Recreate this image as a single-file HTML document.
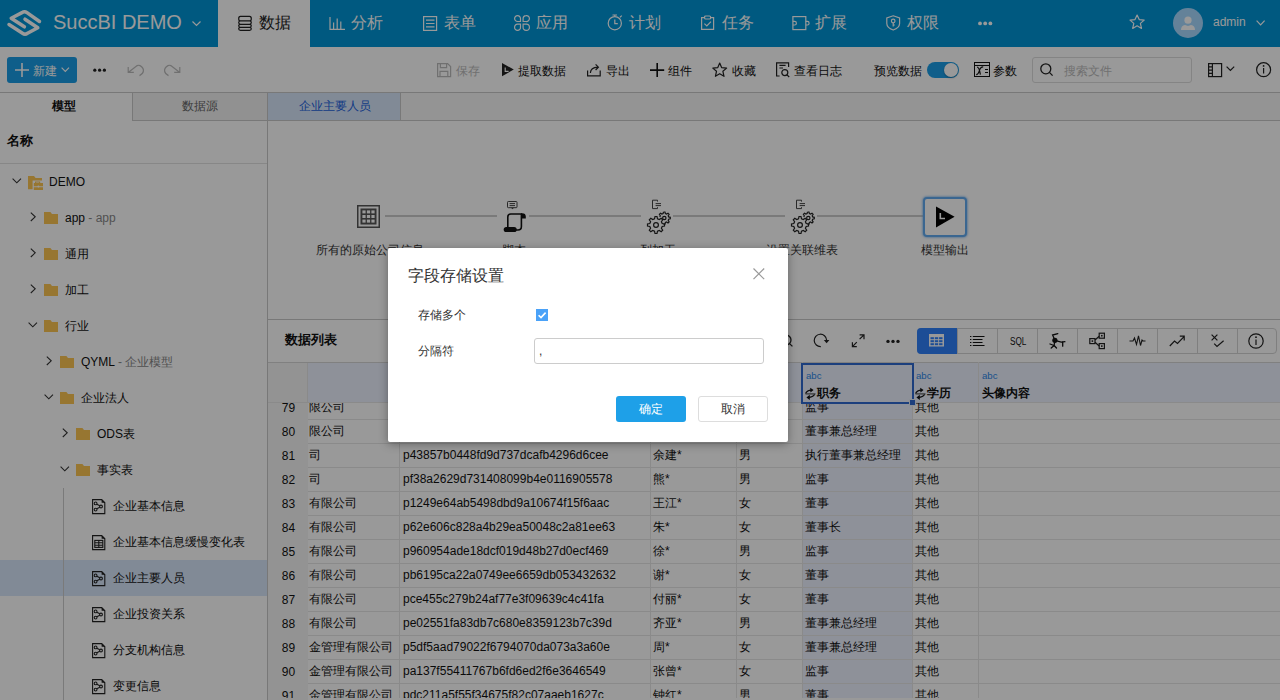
<!DOCTYPE html>
<html><head><meta charset="utf-8">
<style>
*{box-sizing:border-box;margin:0;padding:0}
html,body{width:1280px;height:700px;overflow:hidden;background:#fff}
body{font-family:"Liberation Sans",sans-serif;font-size:12px;color:#333;position:relative}
.a{position:absolute;white-space:nowrap}
svg{position:absolute;overflow:visible}
#hdr{left:0;top:0;width:1280px;height:47px;background:#0095d6}
.nav{color:#fff;font-size:16px;top:13px;line-height:20px}
#tb{left:0;top:47px;width:1280px;height:46px;background:#fff;border-bottom:1px solid #c8c8c8}
.tbt{top:64px;line-height:14px;color:#111}
#ov{left:0;top:0;width:1280px;height:700px;background:rgba(0,0,0,.4)}
#dlg{left:388px;top:248px;width:400px;height:194px;background:#fff;border-radius:2px;box-shadow:0 2px 10px rgba(0,0,0,.35)}
</style></head><body>
<!-- HEADER -->
<div id="hdr" class="a"></div>
<div class="a" style="left:218px;top:0;width:92px;height:47px;background:#fff"></div>
<svg style="left:0;top:0" width="60" height="47"><g fill="none" stroke="#fff" stroke-width="3.5" stroke-linecap="round" stroke-linejoin="round">
<path d="M39.5 21.5 L27 12.6 Q24.5 10.9 22 12.6 L11.2 18.2 L24.4 26.8"/>
<path d="M9 24.5 L22.5 33.3 Q25 35 27.5 33.3 L37.8 27.8 L25 19.2"/>
</g></svg>
<div class="a" style="left:53px;top:10px;font-size:20px;line-height:24px;color:#fff">SuccBI DEMO</div>
<svg style="left:192px;top:21px" width="9" height="5"><path d="M0.5 0.5 L4.5 4.5 L8.5 0.5" fill="none" stroke="#fff" stroke-width="1.2"/></svg>
<!-- nav icons -->
<svg style="left:238px;top:15px" width="15" height="17"><path d="M2.4 1.4 H11.6 M2.4 5.9 H11.6 M2.4 9.3 H11.6 M2.4 12.3 H11.6 M2.4 15.3 H11.6 M2.4 1.4 Q0.7 1.4 0.7 3.6500000000000004 Q0.7 5.9 2.4 5.9 M11.6 1.4 Q13.3 1.4 13.3 3.6500000000000004 Q13.3 5.9 11.6 5.9 M2.4 5.9 Q0.7 5.9 0.7 7.6000000000000005 Q0.7 9.3 2.4 9.3 M11.6 5.9 Q13.3 5.9 13.3 7.6000000000000005 Q13.3 9.3 11.6 9.3 M2.4 9.3 Q0.7 9.3 0.7 10.8 Q0.7 12.3 2.4 12.3 M11.6 9.3 Q13.3 9.3 13.3 10.8 Q13.3 12.3 11.6 12.3 M2.4 12.3 Q0.7 12.3 0.7 13.8 Q0.7 15.3 2.4 15.3 M11.6 12.3 Q13.3 12.3 13.3 13.8 Q13.3 15.3 11.6 15.3" fill="none" stroke="#222" stroke-width="1.2"/></svg>
<svg style="left:329px;top:17px" width="17" height="14"><g fill="none" stroke="#fff" stroke-width="1.2"><path d="M1 0 V12.4 H16"/><path d="M4.6 5.5 V12 M8.2 1.5 V12 M11.8 4.5 V12"/></g></svg>
<svg style="left:423px;top:16px" width="15" height="15"><g fill="none" stroke="#fff" stroke-width="1.2"><rect x="0.6" y="0.6" width="13" height="13.8"/><path d="M3 4.2 H11.5 M3 7.5 H11.5 M3 10.8 H11.5"/></g></svg>
<svg style="left:514px;top:15px" width="17" height="16"><g fill="none" stroke="#fff" stroke-width="1.2"><path d="M6.5 6.5 H3.5500000000000003 A2.95 2.95 0 0 1 0.6 3.5500000000000003 A2.95 2.95 0 0 1 3.5500000000000003 0.6 A2.95 2.95 0 0 1 6.5 3.5500000000000003 Z"/><path d="M9.1 6.5 V3.5500000000000003 A2.95 2.95 0 0 1 12.05 0.6 A2.95 2.95 0 0 1 15.4 3.5500000000000003 A2.95 2.95 0 0 1 12.05 6.5 Z"/><path d="M6.5 9.1 V12.05 A2.95 2.95 0 0 1 3.5500000000000003 15.4 A2.95 2.95 0 0 1 0.6 12.05 A2.95 2.95 0 0 1 3.5500000000000003 9.1 Z"/><path d="M9.1 9.1 H12.05 A2.95 2.95 0 0 1 15.4 12.05 A2.95 2.95 0 0 1 12.05 15.4 A2.95 2.95 0 0 1 9.1 12.05 Z"/></g></svg>
<svg style="left:607px;top:14px" width="17" height="17"><g fill="none" stroke="#fff" stroke-width="1.2"><circle cx="7.8" cy="9.2" r="6.6"/><path d="M5.5 1 H10 M7.8 1 V2.6 M13 3.2 L14.8 1.6 M7.8 5.6 V9.6 H10.8"/></g></svg>
<svg style="left:701px;top:15px" width="15" height="16"><g fill="none" stroke="#fff" stroke-width="1.2"><path d="M3.6 2.6 H0.6 V14.4 H12.6 V2.6 H9.6"/><rect x="3.6" y="1" width="6" height="3" rx="1"/><path d="M3.4 8.6 L5.8 11 L10 6.6"/></g></svg>
<svg style="left:792px;top:16px" width="18" height="15"><g fill="none" stroke="#fff" stroke-width="1.2"><rect x="0.9" y="0.6" width="12.9" height="13"/><path d="M0.9 5.4 H2.6 A1.8 1.8 0 0 1 2.6 9 H0.9 M13.8 5.4 H15.3 A1.8 1.8 0 0 1 15.3 9 H13.8"/></g></svg>
<svg style="left:886px;top:15px" width="15" height="16"><g fill="none" stroke="#fff" stroke-width="1.2"><path d="M7.2 0.8 L13.6 3 V8.4 Q13.6 12.6 7.2 15 Q0.8 12.6 0.8 8.4 V3 Z"/><circle cx="7.2" cy="6" r="1.8"/><path d="M7.2 7.8 V11.6 M7.2 10 H8.8"/></g></svg>
<svg style="left:978px;top:21px" width="15" height="5"><g fill="#fff"><circle cx="2" cy="2.4" r="1.9"/><circle cx="7.2" cy="2.4" r="1.9"/><circle cx="12.4" cy="2.4" r="1.9"/></g></svg>
<div class="a nav" style="left:259px;color:#222">数据</div>
<div class="a nav" style="left:351px">分析</div>
<div class="a nav" style="left:444px">表单</div>
<div class="a nav" style="left:536px">应用</div>
<div class="a nav" style="left:629px">计划</div>
<div class="a nav" style="left:722px">任务</div>
<div class="a nav" style="left:815px">扩展</div>
<div class="a nav" style="left:907px">权限</div>
<svg style="left:1129px;top:14px" width="17" height="17"><path d="M8.1 1 L10.2 5.6 L15.2 6.1 L11.4 9.4 L12.5 14.4 L8.1 11.8 L3.7 14.4 L4.8 9.4 L1 6.1 L6 5.6 Z" fill="none" stroke="#fff" stroke-width="1.2" stroke-linejoin="round"/></svg>
<div class="a" style="left:1173px;top:8px;width:30px;height:30px;border-radius:50%;background:#a7d9ff"></div>
<svg style="left:1180px;top:16px" width="16" height="15"><g fill="#fff"><circle cx="8" cy="4.2" r="3.6"/><path d="M1 14 Q1 9.6 5 9 L8 10 L11 9 Q15 9.6 15 14 Z"/></g></svg>
<div class="a" style="left:1213px;top:15px;font-size:12px;line-height:14px;color:#fff">admin</div>
<svg style="left:1256px;top:20px" width="10" height="7"><path d="M0.6 0.6 L4.6 4.8 L8.6 0.6" fill="none" stroke="#fff" stroke-width="1.2"/></svg>

<!-- TOOLBAR -->
<div id="tb" class="a"></div>
<div class="a" style="left:7px;top:57px;width:70px;height:26px;background:#1a9de6;border-radius:3px"></div>
<svg style="left:15px;top:63px" width="15" height="15"><path d="M7 0 V14 M0 7 H14" stroke="#fff" stroke-width="1.6"/></svg>
<div class="a tbt" style="left:33px;color:#fff">新建</div>
<svg style="left:61px;top:67px" width="10" height="6"><path d="M0.6 0.6 L4.3 4.3 L8 0.6" fill="none" stroke="#fff" stroke-width="1.2"/></svg>
<svg style="left:93px;top:68px" width="14" height="5"><g fill="#222"><circle cx="1.8" cy="2.2" r="1.6"/><circle cx="6.6" cy="2.2" r="1.6"/><circle cx="11.4" cy="2.2" r="1.6"/></g></svg>
<svg style="left:124px;top:60px" width="60" height="20"><g fill="none" stroke="#bbb" stroke-width="1.2"><path d="M4.2 7 V12.4 H9.8 M4.2 12.4 L13.2 5.6 Q14.5 4.9 16 5.6 Q19.8 7.6 19.4 11.2 Q19 13.8 15.5 15.6"/><path d="M55.8 7 V12.4 H50.2 M55.8 12.4 L46.8 5.6 Q45.5 4.9 44 5.6 Q40.2 7.6 40.6 11.2 Q41 13.8 44.5 15.6"/></g></svg>
<!-- right tools -->
<svg style="left:437px;top:63px" width="15" height="15"><g fill="none" stroke="#bbb" stroke-width="1.2"><path d="M0.6 0.6 H10.6 L13.6 3.6 V13.6 H0.6 Z"/><path d="M3.4 0.6 V4.6 H9.6 V0.6 M3 13.6 V8.4 H10.8 V13.6"/></g></svg>
<div class="a tbt" style="left:456px;color:#bbb">保存</div>
<svg style="left:501px;top:62px" width="14" height="16"><path d="M1 1 L12.8 7.6 L1 14.2 Z" fill="#222"/><path d="M4.2 5.6 V9.4 H7.6" fill="none" stroke="#fff" stroke-width="1.1"/></svg>
<div class="a tbt" style="left:518px">提取数据</div>
<svg style="left:587px;top:63px" width="15" height="14"><g fill="none" stroke="#222" stroke-width="1.2"><path d="M0.6 7.4 V12.8 H13.2 V7.4"/><path d="M3.4 10 Q3.6 4.6 10.8 4.2 M8.6 1.4 L11.4 4.2 L8.6 7"/></g></svg>
<div class="a tbt" style="left:606px">导出</div>
<svg style="left:650px;top:63px" width="15" height="15"><path d="M7.2 0 V14 M0 7.1 H14.2" stroke="#111" stroke-width="1.6"/></svg>
<div class="a tbt" style="left:668px">组件</div>
<svg style="left:712px;top:62px" width="17" height="16"><path d="M7.7 1 L9.6 5.6 L14.6 6.1 L10.9 9.3 L12 14.3 L7.7 11.7 L3.4 14.3 L4.5 9.3 L0.8 6.1 L5.8 5.6 Z" fill="none" stroke="#222" stroke-width="1.2" stroke-linejoin="round"/></svg>
<div class="a tbt" style="left:732px">收藏</div>
<svg style="left:776px;top:62px" width="16" height="17"><g fill="none" stroke="#222" stroke-width="1.2"><path d="M3.6 14 H0.6 V0.8 H12.6 V5"/><path d="M3.4 3.4 H9.6 M3.4 6 H7"/><circle cx="8.8" cy="10.6" r="3"/><path d="M11 12.8 L13.2 15"/></g></svg>
<div class="a tbt" style="left:794px">查看日志</div>
<div class="a tbt" style="left:874px">预览数据</div>
<div class="a" style="left:927px;top:62px;width:32px;height:16px;border-radius:8px;background:#1a9de6"></div>
<div class="a" style="left:944px;top:63px;width:14px;height:14px;border-radius:50%;background:#fff;box-shadow:0 1px 2px rgba(0,0,0,.3)"></div>
<svg style="left:974px;top:62px" width="17" height="16"><g fill="none" stroke="#111" stroke-width="1"><rect x="0.5" y="0.5" width="15" height="14"/><path d="M0.5 3.5 H15.5"/><path d="M2.2 12.6 Q4.2 12.6 5.4 8.6 Q6.6 4.8 9.2 4.9 M3 5 Q5.2 5 6.4 12.6" stroke-width="1.2"/><path d="M11 7.5 H14 M11 10.5 H14"/></g></svg>
<div class="a tbt" style="left:993px">参数</div>
<div class="a" style="left:1032px;top:57px;width:160px;height:26px;border:1px solid #ddd;border-radius:3px"></div>
<svg style="left:1040px;top:63px" width="14" height="14"><g fill="none" stroke="#222" stroke-width="1.3"><circle cx="5.8" cy="5.8" r="5"/><path d="M9.4 9.4 L12.6 12.6"/></g></svg>
<div class="a tbt" style="left:1064px;color:#bbb">搜索文件</div>
<svg style="left:1208px;top:63px" width="15" height="15"><g fill="none" stroke="#222" stroke-width="1.2"><rect x="0.6" y="0.6" width="13" height="13"/><path d="M4.4 0.6 V13.6 M0.6 3.8 H4.4 M0.6 7.1 H4.4 M0.6 10.4 H4.4"/></g></svg>
<svg style="left:1226px;top:66px" width="10" height="6"><path d="M0.6 0.6 L4.4 4.4 L8.2 0.6" fill="none" stroke="#222" stroke-width="1.2"/></svg>
<svg style="left:1256px;top:62px" width="16" height="16"><g fill="none" stroke="#222" stroke-width="1.2"><circle cx="7.6" cy="7.7" r="7"/><path d="M7.6 6 V11.4"/></g><circle cx="7.6" cy="3.9" r="0.9" fill="#222"/></svg>

<!-- LEFT PANEL -->
<div class="a" style="left:0;top:93px;width:268px;height:607px;background:#fff;border-right:1px solid #c8c8c8"></div>
<div class="a" style="left:132px;top:93px;width:136px;height:28px;background:#f2f2f2;border-left:1px solid #c8c8c8;border-bottom:1px solid #c8c8c8;border-right:1px solid #c8c8c8"></div>
<div class="a" style="left:52px;top:99px;font-weight:bold;line-height:14px;color:#111">模型</div>
<div class="a" style="left:182px;top:99px;color:#666;line-height:14px">数据源</div>
<div class="a" style="left:7px;top:134px;font-weight:bold;font-size:13px;line-height:14px;color:#111">名称</div>
<div class="a" style="left:0;top:163px;width:267px;height:1px;background:#e2e2e2"></div>
<div class="a" style="left:0;top:560px;width:267px;height:36px;background:#d8e7fb"></div>
<div class="a" style="left:63px;top:488px;width:1px;height:212px;background:#ccc"></div>
<svg style="left:12px;top:178px" width="10" height="6"><path d="M0.6 0.6 L4.8 4.8 L9 0.6" fill="none" stroke="#333" stroke-width="1.1"/></svg>
<svg style="left:28px;top:176px" width="16" height="15"><path d="M0 0 H6 L7.6 2 H14 V4.6 H4.6 V13.2 H0 Z" fill="#fcc552"/><path d="M7 5.4 H12.2 V7 H15 V10.2 H5.8 V7 H7 Z M8.2 6.4 V7 H11 V6.4 Z M5.8 11.2 H15 V14 H5.8 Z" fill="#fcc552"/><circle cx="10.4" cy="10.6" r="1" fill="#fff"/></svg>
<div class="a" style="left:49px;top:175px;line-height:14px;color:#111">DEMO</div>
<svg style="left:30px;top:212px" width="7" height="10"><path d="M0.8 0.6 L5.2 4.8 L0.8 9" fill="none" stroke="#333" stroke-width="1.1"/></svg>
<svg style="left:44px;top:212px" width="14" height="12"><path d="M0 0 H6.4 L8 2 H14 V12 H0 Z" fill="#fcc552"/></svg>
<div class="a" style="left:65px;top:211px;line-height:14px;color:#111">app<span style="color:#888"> - app</span></div>
<svg style="left:30px;top:248px" width="7" height="10"><path d="M0.8 0.6 L5.2 4.8 L0.8 9" fill="none" stroke="#333" stroke-width="1.1"/></svg>
<svg style="left:44px;top:248px" width="14" height="12"><path d="M0 0 H6.4 L8 2 H14 V12 H0 Z" fill="#fcc552"/></svg>
<div class="a" style="left:65px;top:247px;line-height:14px;color:#111">通用</div>
<svg style="left:30px;top:284px" width="7" height="10"><path d="M0.8 0.6 L5.2 4.8 L0.8 9" fill="none" stroke="#333" stroke-width="1.1"/></svg>
<svg style="left:44px;top:284px" width="14" height="12"><path d="M0 0 H6.4 L8 2 H14 V12 H0 Z" fill="#fcc552"/></svg>
<div class="a" style="left:65px;top:283px;line-height:14px;color:#111">加工</div>
<svg style="left:28px;top:322px" width="10" height="6"><path d="M0.6 0.6 L4.8 4.8 L9 0.6" fill="none" stroke="#333" stroke-width="1.1"/></svg>
<svg style="left:44px;top:320px" width="14" height="12"><path d="M0 0 H6.4 L8 2 H14 V12 H0 Z" fill="#fcc552"/></svg>
<div class="a" style="left:65px;top:319px;line-height:14px;color:#111">行业</div>
<svg style="left:46px;top:356px" width="7" height="10"><path d="M0.8 0.6 L5.2 4.8 L0.8 9" fill="none" stroke="#333" stroke-width="1.1"/></svg>
<svg style="left:60px;top:356px" width="14" height="12"><path d="M0 0 H6.4 L8 2 H14 V12 H0 Z" fill="#fcc552"/></svg>
<div class="a" style="left:81px;top:355px;line-height:14px;color:#111">QYML<span style="color:#888"> - 企业模型</span></div>
<svg style="left:44px;top:394px" width="10" height="6"><path d="M0.6 0.6 L4.8 4.8 L9 0.6" fill="none" stroke="#333" stroke-width="1.1"/></svg>
<svg style="left:60px;top:392px" width="14" height="12"><path d="M0 0 H6.4 L8 2 H14 V12 H0 Z" fill="#fcc552"/></svg>
<div class="a" style="left:81px;top:391px;line-height:14px;color:#111">企业法人</div>
<svg style="left:62px;top:428px" width="7" height="10"><path d="M0.8 0.6 L5.2 4.8 L0.8 9" fill="none" stroke="#333" stroke-width="1.1"/></svg>
<svg style="left:76px;top:428px" width="14" height="12"><path d="M0 0 H6.4 L8 2 H14 V12 H0 Z" fill="#fcc552"/></svg>
<div class="a" style="left:97px;top:427px;line-height:14px;color:#111">ODS表</div>
<svg style="left:60px;top:466px" width="10" height="6"><path d="M0.6 0.6 L4.8 4.8 L9 0.6" fill="none" stroke="#333" stroke-width="1.1"/></svg>
<svg style="left:76px;top:464px" width="14" height="12"><path d="M0 0 H6.4 L8 2 H14 V12 H0 Z" fill="#fcc552"/></svg>
<div class="a" style="left:97px;top:463px;line-height:14px;color:#111">事实表</div>
<svg style="left:92px;top:499px" width="14" height="16"><g fill="none" stroke="#222" stroke-width="1.1"><path d="M0.6 0.6 H9.6 L12.8 3.8 V14.6 H0.6 Z"/><circle cx="3.6" cy="4.4" r="1.4"/><circle cx="3.6" cy="10.6" r="1.4"/><circle cx="9" cy="7.5" r="1.4"/><path d="M4.8 5.2 L7.8 6.8 M4.8 9.8 L7.8 8.2"/></g><path d="M9.6 0 L13.4 3.8 H9.6 Z" fill="#222"/></svg>
<div class="a" style="left:113px;top:499px;line-height:14px;color:#111">企业基本信息</div>
<svg style="left:92px;top:535px" width="14" height="16"><g fill="none" stroke="#222" stroke-width="1.1"><path d="M0.6 0.6 H9.6 L12.8 3.8 V14.6 H0.6 Z"/><rect x="2.8" y="5.4" width="8" height="7"/><path d="M2.8 7.8 H10.8 M2.8 10.2 H10.8 M6.8 5.4 V12.4"/></g><path d="M9.6 0 L13.4 3.8 H9.6 Z" fill="#222"/></svg>
<div class="a" style="left:113px;top:535px;line-height:14px;color:#111">企业基本信息缓慢变化表</div>
<svg style="left:92px;top:571px" width="14" height="16"><g fill="none" stroke="#222" stroke-width="1.1"><path d="M0.6 0.6 H9.6 L12.8 3.8 V14.6 H0.6 Z"/><circle cx="3.6" cy="4.4" r="1.4"/><circle cx="3.6" cy="10.6" r="1.4"/><circle cx="9" cy="7.5" r="1.4"/><path d="M4.8 5.2 L7.8 6.8 M4.8 9.8 L7.8 8.2"/></g><path d="M9.6 0 L13.4 3.8 H9.6 Z" fill="#222"/></svg>
<div class="a" style="left:113px;top:571px;line-height:14px;color:#111">企业主要人员</div>
<svg style="left:92px;top:607px" width="14" height="16"><g fill="none" stroke="#222" stroke-width="1.1"><path d="M0.6 0.6 H9.6 L12.8 3.8 V14.6 H0.6 Z"/><circle cx="3.6" cy="4.4" r="1.4"/><circle cx="3.6" cy="10.6" r="1.4"/><circle cx="9" cy="7.5" r="1.4"/><path d="M4.8 5.2 L7.8 6.8 M4.8 9.8 L7.8 8.2"/></g><path d="M9.6 0 L13.4 3.8 H9.6 Z" fill="#222"/></svg>
<div class="a" style="left:113px;top:607px;line-height:14px;color:#111">企业投资关系</div>
<svg style="left:92px;top:643px" width="14" height="16"><g fill="none" stroke="#222" stroke-width="1.1"><path d="M0.6 0.6 H9.6 L12.8 3.8 V14.6 H0.6 Z"/><circle cx="3.6" cy="4.4" r="1.4"/><circle cx="3.6" cy="10.6" r="1.4"/><circle cx="9" cy="7.5" r="1.4"/><path d="M4.8 5.2 L7.8 6.8 M4.8 9.8 L7.8 8.2"/></g><path d="M9.6 0 L13.4 3.8 H9.6 Z" fill="#222"/></svg>
<div class="a" style="left:113px;top:643px;line-height:14px;color:#111">分支机构信息</div>
<svg style="left:92px;top:679px" width="14" height="16"><g fill="none" stroke="#222" stroke-width="1.1"><path d="M0.6 0.6 H9.6 L12.8 3.8 V14.6 H0.6 Z"/><circle cx="3.6" cy="4.4" r="1.4"/><circle cx="3.6" cy="10.6" r="1.4"/><circle cx="9" cy="7.5" r="1.4"/><path d="M4.8 5.2 L7.8 6.8 M4.8 9.8 L7.8 8.2"/></g><path d="M9.6 0 L13.4 3.8 H9.6 Z" fill="#222"/></svg>
<div class="a" style="left:113px;top:679px;line-height:14px;color:#111">变更信息</div>
<!-- MAIN -->
<div class="a" style="left:268px;top:93px;width:1012px;height:27px;background:#f7f7f7"></div>
<div class="a" style="left:268px;top:93px;width:133px;height:27px;background:#d8e7fb;border-right:1px solid #c8c8c8"></div>
<div class="a" style="left:268px;top:120px;width:1012px;height:1px;background:#c8c8c8"></div>
<div class="a" style="left:299px;top:99px;color:#1c62dc;line-height:14px">企业主要人员</div>
<div class="a" style="left:385px;top:215px;width:112px;height:2px;background:#ccc"></div>
<div class="a" style="left:529px;top:215px;width:112px;height:2px;background:#ccc"></div>
<div class="a" style="left:673px;top:215px;width:112px;height:2px;background:#ccc"></div>
<div class="a" style="left:817px;top:215px;width:106px;height:2px;background:#ccc"></div>
<svg style="left:357px;top:205px" width="23" height="23"><rect x="0.75" y="0.75" width="21.5" height="21.5" fill="none" stroke="#555" stroke-width="1.5"/><rect x="3.5" y="3.5" width="16" height="16" fill="#555"/><g fill="#fff"><rect x="5.4" y="5.4" width="3.2" height="3"/><rect x="9.9" y="5.4" width="3.2" height="3"/><rect x="14.4" y="5.4" width="3.2" height="3"/><rect x="5.4" y="10" width="3.2" height="3"/><rect x="9.9" y="10" width="3.2" height="3"/><rect x="14.4" y="10" width="3.2" height="3"/><rect x="5.4" y="14.6" width="3.2" height="3"/><rect x="9.9" y="14.6" width="3.2" height="3"/><rect x="14.4" y="14.6" width="3.2" height="3"/></g></svg>
<svg style="left:498px;top:196px" width="34" height="42"><g fill="none" stroke="#444" stroke-width="1"><rect x="9.5" y="5.5" width="9.5" height="6.2" rx="0.8"/><path d="M11.6 7.6 H17 M11.6 9.6 H17"/></g><path d="M13 11.7 H16 L14.5 13.2 Z" fill="#444"/><g fill="none" stroke="#111" stroke-width="1.6"><path d="M9.8 31 V21 Q9.8 18 12.8 18 H24 M23.4 18 V30.5 Q23.4 34 20 34 H12"/></g><path d="M23 17.2 H24.2 Q27.8 17.2 27.8 20.6 V22.4 H23 Z" fill="#111"/><rect x="5.7" y="30.9" width="13" height="5.2" rx="2.6" fill="#111"/></svg>
<svg style="left:646px;top:199px" width="26" height="36"><g fill="none" stroke="#444" stroke-width="1"><path d="M11.5 2.6 V1.2 H6.5 V9.6 H11.5 V8.2 M9.6 4.6 H15 M9.6 6.6 H15"/></g><g fill="none" stroke="#222" stroke-width="1.2"><path d="M9 17.5 L11 17.5 L11.5 19.8 L13.3 20.6 L15.2 19.3 L16.7 20.8 L15.4 22.7 L16.2 24.5 L18.5 25 L18.5 27 L16.2 27.5 L15.4 29.3 L16.7 31.2 L15.2 32.7 L13.3 31.4 L11.5 32.2 L11 34.5 L9 34.5 L8.5 32.2 L6.7 31.4 L4.8 32.7 L3.3 31.2 L4.6 29.3 L3.8 27.5 L1.5 27 L1.5 25 L3.8 24.5 L4.6 22.7 L3.3 20.8 L4.8 19.3 L6.7 20.6 L8.5 19.8 Z"/><circle cx="10" cy="26" r="2.4"/><path d="M17.5 13 L19 13 L19.4 14.6 L20.6 15.1 L22 14.2 L23.1 15.3 L22.2 16.7 L22.7 17.9 L24.3 18.3 L24.3 19.8 L22.7 20.2 L22.2 21.4 L23.1 22.8 L22 23.9 L20.6 23 L19.4 23.5 L19 25.1 L17.5 25.1"/><path d="M17.5 13 L17.1 14.6 L15.9 15.1 L14.5 14.2 L13.4 15.3 L14.3 16.7 L13.8 17.9"/><circle cx="18.3" cy="19" r="1.7"/></g></svg>
<svg style="left:790px;top:199px" width="26" height="36"><g fill="none" stroke="#444" stroke-width="1"><path d="M11.5 2.6 V1.2 H6.5 V9.6 H11.5 V8.2 M9.6 4.6 H15 M9.6 6.6 H15"/></g><g fill="none" stroke="#222" stroke-width="1.2"><path d="M9 17.5 L11 17.5 L11.5 19.8 L13.3 20.6 L15.2 19.3 L16.7 20.8 L15.4 22.7 L16.2 24.5 L18.5 25 L18.5 27 L16.2 27.5 L15.4 29.3 L16.7 31.2 L15.2 32.7 L13.3 31.4 L11.5 32.2 L11 34.5 L9 34.5 L8.5 32.2 L6.7 31.4 L4.8 32.7 L3.3 31.2 L4.6 29.3 L3.8 27.5 L1.5 27 L1.5 25 L3.8 24.5 L4.6 22.7 L3.3 20.8 L4.8 19.3 L6.7 20.6 L8.5 19.8 Z"/><circle cx="10" cy="26" r="2.4"/><path d="M17.5 13 L19 13 L19.4 14.6 L20.6 15.1 L22 14.2 L23.1 15.3 L22.2 16.7 L22.7 17.9 L24.3 18.3 L24.3 19.8 L22.7 20.2 L22.2 21.4 L23.1 22.8 L22 23.9 L20.6 23 L19.4 23.5 L19 25.1 L17.5 25.1"/><path d="M17.5 13 L17.1 14.6 L15.9 15.1 L14.5 14.2 L13.4 15.3 L14.3 16.7 L13.8 17.9"/><circle cx="18.3" cy="19" r="1.7"/></g></svg>
<div class="a" style="left:923px;top:197px;width:44px;height:40px;border:2px solid #62aaf0;border-radius:4px;background:#fff;box-shadow:0 0 2px 1px rgba(98,170,240,.55)"></div>
<svg style="left:935px;top:206px" width="21" height="22"><path d="M1 0.6 L19.6 10.8 L1 21.4 Z" fill="#000"/><path d="M5.3 7 V12.5 H10" fill="none" stroke="#fff" stroke-width="1.6"/></svg>
<div class="a" style="left:316px;top:243px;width:108px;text-align:center;line-height:14px;color:#333">所有的原始公司信息</div>
<div class="a" style="left:502px;top:243px;width:24px;text-align:center;line-height:14px;color:#333">脚本</div>
<div class="a" style="left:640px;top:243px;width:36px;text-align:center;line-height:14px;color:#333">列加工</div>
<div class="a" style="left:766px;top:243px;width:72px;text-align:center;line-height:14px;color:#333">设置关联维表</div>
<div class="a" style="left:921px;top:243px;width:48px;text-align:center;line-height:14px;color:#333">模型输出</div>
<div class="a" style="left:268px;top:319px;width:1012px;height:1px;background:#c8c8c8"></div>
<div class="a" style="left:285px;top:333px;font-weight:bold;font-size:13px;line-height:14px;color:#111">数据列表</div>
<svg style="left:780px;top:334px" width="14" height="14"><g fill="none" stroke="#222" stroke-width="1.3"><circle cx="6" cy="6" r="5"/><path d="M9.6 9.6 L12.4 12.4"/></g></svg>
<svg style="left:808px;top:328px" width="24" height="24"><path d="M12.8 18.6 A6.2 6.2 0 1 1 18.6 12" fill="none" stroke="#222" stroke-width="1.2"/><path d="M15.8 12 H21.4 L18.6 15.2 Z" fill="#222"/></svg>
<svg style="left:850px;top:333px" width="16" height="16"><g fill="none" stroke="#222" stroke-width="1.2"><path d="M9.6 6.2 L14 1.8 M9.6 1.8 H14 V6.2 M6.8 9.2 L2.4 13.6 M2.4 9.2 V13.6 H6.8"/></g></svg>
<svg style="left:886px;top:339px" width="15" height="5"><g fill="#222"><circle cx="2" cy="2.4" r="1.7"/><circle cx="7" cy="2.4" r="1.7"/><circle cx="12" cy="2.4" r="1.7"/></g></svg>
<div class="a" style="left:917px;top:328px;width:360px;height:26px;border:1px solid #d4d4d4;border-radius:4px;background:#fff"></div>
<div class="a" style="left:957px;top:328px;width:1px;height:26px;background:#d4d4d4"></div>
<div class="a" style="left:997px;top:328px;width:1px;height:26px;background:#d4d4d4"></div>
<div class="a" style="left:1037px;top:328px;width:1px;height:26px;background:#d4d4d4"></div>
<div class="a" style="left:1077px;top:328px;width:1px;height:26px;background:#d4d4d4"></div>
<div class="a" style="left:1117px;top:328px;width:1px;height:26px;background:#d4d4d4"></div>
<div class="a" style="left:1157px;top:328px;width:1px;height:26px;background:#d4d4d4"></div>
<div class="a" style="left:1197px;top:328px;width:1px;height:26px;background:#d4d4d4"></div>
<div class="a" style="left:1237px;top:328px;width:1px;height:26px;background:#d4d4d4"></div>
<div class="a" style="left:917px;top:328px;width:40px;height:26px;background:#3080fa;border-radius:4px 0 0 4px"></div>
<svg style="left:929px;top:334px" width="16" height="14"><rect x="0" y="0" width="15" height="12.5" fill="#fff"/><g fill="#3080fa"><rect x="1.5" y="3.2" width="3.4" height="2"/><rect x="5.8" y="3.2" width="3.4" height="2"/><rect x="10.1" y="3.2" width="3.4" height="2"/><rect x="1.5" y="6.2" width="3.4" height="2"/><rect x="5.8" y="6.2" width="3.4" height="2"/><rect x="10.1" y="6.2" width="3.4" height="2"/><rect x="1.5" y="9.2" width="3.4" height="2"/><rect x="5.8" y="9.2" width="3.4" height="2"/><rect x="10.1" y="9.2" width="3.4" height="2"/></g></svg>
<svg style="left:969px;top:335px" width="17" height="12"><g stroke="#111" stroke-width="1"><path d="M1 1.5 H2.4 M1 4.5 H2.4 M1 7.5 H2.4 M1 10.5 H2.4"/><path d="M3.8 1.5 H15.5 M3.8 4.5 H13.5 M3.8 7.5 H13.5 M3.8 10.5 H15.5"/></g></svg>
<div class="a" style="left:1010px;top:336px;font-size:10px;line-height:11px;color:#111;transform:scaleX(0.82);transform-origin:0 0">SQL</div>
<svg style="left:1044px;top:328px" width="26" height="24"><g fill="none" stroke="#111" stroke-width="1.3" stroke-linecap="round"><path d="M10.9 12.3 L8.6 7 L13.8 5.6 M10.9 12.3 L17.2 14.1 L20.9 13.7 M18.7 14 L18.7 18.2 M10.9 12.3 L10.1 17.5 M10.1 17.5 L6 16 M10.1 17.5 L7.2 20 M10.1 17.5 L12.5 20"/></g><circle cx="10.9" cy="12.3" r="2.6" fill="#111"/></svg>
<svg style="left:1088px;top:332px" width="18" height="18"><g fill="none" stroke="#222" stroke-width="1.2"><rect x="1.8" y="6.6" width="5.2" height="5"/><rect x="11.2" y="1.2" width="5.2" height="5"/><rect x="11.2" y="11.6" width="5.2" height="5"/><path d="M7 8 L11.2 4.2 M7 10.2 L11.2 14"/></g><g fill="#222"><rect x="3.6" y="8.3" width="1.6" height="1.6"/><rect x="13" y="2.9" width="1.6" height="1.6"/><rect x="13" y="13.3" width="1.6" height="1.6"/></g></svg>
<svg style="left:1129px;top:335px" width="18" height="12"><path d="M0.5 6 H4 L5.5 3 L7.5 9.5 L9.5 0.8 L11.5 10.5 L13 5 L14 6 H16.5" fill="none" stroke="#222" stroke-width="1.1"/></svg>
<svg style="left:1169px;top:335px" width="17" height="12"><g fill="none" stroke="#222" stroke-width="1.2"><path d="M0.8 11 L5.5 6 L8.5 8.5 L14.8 1.8 M10.8 1.2 H15.2 V5.6"/></g></svg>
<svg style="left:1211px;top:334px" width="15" height="14"><g fill="none" stroke="#222" stroke-width="1.2"><path d="M0.6 0.6 L6.4 6.4 M6.4 0.6 L0.6 6.4"/><path d="M3.2 9.6 L6 12.4 L12.6 6.8"/></g></svg>
<svg style="left:1248px;top:333px" width="17" height="17"><g fill="none" stroke="#222" stroke-width="1.2"><circle cx="8" cy="8" r="7.2"/><path d="M8 6.4 V12"/></g><circle cx="8" cy="4.2" r="0.9" fill="#222"/></svg>
<!-- TABLE -->
<div class="a" style="left:268px;top:362px;width:1012px;height:338px;background:#fff"></div>
<div class="a" style="left:268px;top:362px;width:40px;height:338px;background:#f6f6f6"></div>
<div class="a" style="left:308px;top:363px;width:972px;height:40px;background:#edf2ff"></div>
<div class="a" style="left:268px;top:362px;width:1012px;height:1px;background:#d6d6d6"></div>
<div class="a" style="left:307px;top:363px;width:1px;height:40px;background:#e6e6e6"></div>
<div class="a" style="left:802px;top:403px;width:110px;height:295px;background:#edf2ff"></div>
<div class="a" style="left:268px;top:403px;width:1012px;height:295px;overflow:hidden">
<div class="a" style="left:40px;top:16px;width:972px;height:1px;background:#e6e6e6"></div>
<div class="a" style="left:1px;top:-2px;width:39px;text-align:center;line-height:14px;color:#111">79</div>
<div class="a" style="left:40px;top:-8px;width:91px;height:24px;overflow:hidden"><div class="a" style="left:1px;top:5px;line-height:14px;color:#111">限公司</div></div>
<div class="a" style="left:537px;top:-3px;line-height:14px;color:#111">监事</div>
<div class="a" style="left:647px;top:-3px;line-height:14px;color:#111">其他</div>
<div class="a" style="left:40px;top:40px;width:972px;height:1px;background:#e6e6e6"></div>
<div class="a" style="left:1px;top:22px;width:39px;text-align:center;line-height:14px;color:#111">80</div>
<div class="a" style="left:40px;top:16px;width:91px;height:24px;overflow:hidden"><div class="a" style="left:1px;top:5px;line-height:14px;color:#111">限公司</div></div>
<div class="a" style="left:537px;top:21px;line-height:14px;color:#111">董事兼总经理</div>
<div class="a" style="left:647px;top:21px;line-height:14px;color:#111">其他</div>
<div class="a" style="left:40px;top:64px;width:972px;height:1px;background:#e6e6e6"></div>
<div class="a" style="left:1px;top:46px;width:39px;text-align:center;line-height:14px;color:#111">81</div>
<div class="a" style="left:40px;top:40px;width:91px;height:24px;overflow:hidden"><div class="a" style="left:1px;top:5px;line-height:14px;color:#111">司</div></div>
<div class="a" style="left:135px;top:45px;line-height:14px;color:#111">p43857b0448fd9d737dcafb4296d6cee</div>
<div class="a" style="left:385px;top:45px;line-height:14px;color:#111">余建*</div>
<div class="a" style="left:471px;top:45px;line-height:14px;color:#111">男</div>
<div class="a" style="left:537px;top:45px;line-height:14px;color:#111">执行董事兼总经理</div>
<div class="a" style="left:647px;top:45px;line-height:14px;color:#111">其他</div>
<div class="a" style="left:40px;top:88px;width:972px;height:1px;background:#e6e6e6"></div>
<div class="a" style="left:1px;top:70px;width:39px;text-align:center;line-height:14px;color:#111">82</div>
<div class="a" style="left:40px;top:64px;width:91px;height:24px;overflow:hidden"><div class="a" style="left:1px;top:5px;line-height:14px;color:#111">司</div></div>
<div class="a" style="left:135px;top:69px;line-height:14px;color:#111">pf38a2629d731408099b4e0116905578</div>
<div class="a" style="left:385px;top:69px;line-height:14px;color:#111">熊*</div>
<div class="a" style="left:471px;top:69px;line-height:14px;color:#111">男</div>
<div class="a" style="left:537px;top:69px;line-height:14px;color:#111">监事</div>
<div class="a" style="left:647px;top:69px;line-height:14px;color:#111">其他</div>
<div class="a" style="left:40px;top:112px;width:972px;height:1px;background:#e6e6e6"></div>
<div class="a" style="left:1px;top:94px;width:39px;text-align:center;line-height:14px;color:#111">83</div>
<div class="a" style="left:40px;top:88px;width:91px;height:24px;overflow:hidden"><div class="a" style="left:1px;top:5px;line-height:14px;color:#111">有限公司</div></div>
<div class="a" style="left:135px;top:93px;line-height:14px;color:#111">p1249e64ab5498dbd9a10674f15f6aac</div>
<div class="a" style="left:385px;top:93px;line-height:14px;color:#111">王江*</div>
<div class="a" style="left:471px;top:93px;line-height:14px;color:#111">女</div>
<div class="a" style="left:537px;top:93px;line-height:14px;color:#111">董事</div>
<div class="a" style="left:647px;top:93px;line-height:14px;color:#111">其他</div>
<div class="a" style="left:40px;top:136px;width:972px;height:1px;background:#e6e6e6"></div>
<div class="a" style="left:1px;top:118px;width:39px;text-align:center;line-height:14px;color:#111">84</div>
<div class="a" style="left:40px;top:112px;width:91px;height:24px;overflow:hidden"><div class="a" style="left:1px;top:5px;line-height:14px;color:#111">有限公司</div></div>
<div class="a" style="left:135px;top:117px;line-height:14px;color:#111">p62e606c828a4b29ea50048c2a81ee63</div>
<div class="a" style="left:385px;top:117px;line-height:14px;color:#111">朱*</div>
<div class="a" style="left:471px;top:117px;line-height:14px;color:#111">女</div>
<div class="a" style="left:537px;top:117px;line-height:14px;color:#111">董事长</div>
<div class="a" style="left:647px;top:117px;line-height:14px;color:#111">其他</div>
<div class="a" style="left:40px;top:160px;width:972px;height:1px;background:#e6e6e6"></div>
<div class="a" style="left:1px;top:142px;width:39px;text-align:center;line-height:14px;color:#111">85</div>
<div class="a" style="left:40px;top:136px;width:91px;height:24px;overflow:hidden"><div class="a" style="left:1px;top:5px;line-height:14px;color:#111">有限公司</div></div>
<div class="a" style="left:135px;top:141px;line-height:14px;color:#111">p960954ade18dcf019d48b27d0ecf469</div>
<div class="a" style="left:385px;top:141px;line-height:14px;color:#111">徐*</div>
<div class="a" style="left:471px;top:141px;line-height:14px;color:#111">男</div>
<div class="a" style="left:537px;top:141px;line-height:14px;color:#111">监事</div>
<div class="a" style="left:647px;top:141px;line-height:14px;color:#111">其他</div>
<div class="a" style="left:40px;top:184px;width:972px;height:1px;background:#e6e6e6"></div>
<div class="a" style="left:1px;top:166px;width:39px;text-align:center;line-height:14px;color:#111">86</div>
<div class="a" style="left:40px;top:160px;width:91px;height:24px;overflow:hidden"><div class="a" style="left:1px;top:5px;line-height:14px;color:#111">有限公司</div></div>
<div class="a" style="left:135px;top:165px;line-height:14px;color:#111">pb6195ca22a0749ee6659db053432632</div>
<div class="a" style="left:385px;top:165px;line-height:14px;color:#111">谢*</div>
<div class="a" style="left:471px;top:165px;line-height:14px;color:#111">女</div>
<div class="a" style="left:537px;top:165px;line-height:14px;color:#111">董事</div>
<div class="a" style="left:647px;top:165px;line-height:14px;color:#111">其他</div>
<div class="a" style="left:40px;top:208px;width:972px;height:1px;background:#e6e6e6"></div>
<div class="a" style="left:1px;top:190px;width:39px;text-align:center;line-height:14px;color:#111">87</div>
<div class="a" style="left:40px;top:184px;width:91px;height:24px;overflow:hidden"><div class="a" style="left:1px;top:5px;line-height:14px;color:#111">有限公司</div></div>
<div class="a" style="left:135px;top:189px;line-height:14px;color:#111">pce455c279b24af77e3f09639c4c41fa</div>
<div class="a" style="left:385px;top:189px;line-height:14px;color:#111">付丽*</div>
<div class="a" style="left:471px;top:189px;line-height:14px;color:#111">女</div>
<div class="a" style="left:537px;top:189px;line-height:14px;color:#111">董事</div>
<div class="a" style="left:647px;top:189px;line-height:14px;color:#111">其他</div>
<div class="a" style="left:40px;top:232px;width:972px;height:1px;background:#e6e6e6"></div>
<div class="a" style="left:1px;top:214px;width:39px;text-align:center;line-height:14px;color:#111">88</div>
<div class="a" style="left:40px;top:208px;width:91px;height:24px;overflow:hidden"><div class="a" style="left:1px;top:5px;line-height:14px;color:#111">有限公司</div></div>
<div class="a" style="left:135px;top:213px;line-height:14px;color:#111">pe02551fa83db7c680e8359123b7c39d</div>
<div class="a" style="left:385px;top:213px;line-height:14px;color:#111">齐亚*</div>
<div class="a" style="left:471px;top:213px;line-height:14px;color:#111">男</div>
<div class="a" style="left:537px;top:213px;line-height:14px;color:#111">董事兼总经理</div>
<div class="a" style="left:647px;top:213px;line-height:14px;color:#111">其他</div>
<div class="a" style="left:40px;top:256px;width:972px;height:1px;background:#e6e6e6"></div>
<div class="a" style="left:1px;top:238px;width:39px;text-align:center;line-height:14px;color:#111">89</div>
<div class="a" style="left:40px;top:232px;width:91px;height:24px;overflow:hidden"><div class="a" style="left:1px;top:5px;line-height:14px;color:#111">金管理有限公司</div></div>
<div class="a" style="left:135px;top:237px;line-height:14px;color:#111">p5df5aad79022f6794070da073a3a60e</div>
<div class="a" style="left:385px;top:237px;line-height:14px;color:#111">周*</div>
<div class="a" style="left:471px;top:237px;line-height:14px;color:#111">女</div>
<div class="a" style="left:537px;top:237px;line-height:14px;color:#111">董事兼总经理</div>
<div class="a" style="left:647px;top:237px;line-height:14px;color:#111">其他</div>
<div class="a" style="left:40px;top:280px;width:972px;height:1px;background:#e6e6e6"></div>
<div class="a" style="left:1px;top:262px;width:39px;text-align:center;line-height:14px;color:#111">90</div>
<div class="a" style="left:40px;top:256px;width:91px;height:24px;overflow:hidden"><div class="a" style="left:1px;top:5px;line-height:14px;color:#111">金管理有限公司</div></div>
<div class="a" style="left:135px;top:261px;line-height:14px;color:#111">pa137f55411767b6fd6ed2f6e3646549</div>
<div class="a" style="left:385px;top:261px;line-height:14px;color:#111">张曾*</div>
<div class="a" style="left:471px;top:261px;line-height:14px;color:#111">女</div>
<div class="a" style="left:537px;top:261px;line-height:14px;color:#111">监事</div>
<div class="a" style="left:647px;top:261px;line-height:14px;color:#111">其他</div>
<div class="a" style="left:40px;top:304px;width:972px;height:1px;background:#e6e6e6"></div>
<div class="a" style="left:1px;top:286px;width:39px;text-align:center;line-height:14px;color:#111">91</div>
<div class="a" style="left:40px;top:280px;width:91px;height:24px;overflow:hidden"><div class="a" style="left:1px;top:5px;line-height:14px;color:#111">金管理有限公司</div></div>
<div class="a" style="left:135px;top:285px;line-height:14px;color:#111">pdc211a5f55f34675f82c07aaeb1627c</div>
<div class="a" style="left:385px;top:285px;line-height:14px;color:#111">钟红*</div>
<div class="a" style="left:471px;top:285px;line-height:14px;color:#111">男</div>
<div class="a" style="left:537px;top:285px;line-height:14px;color:#111">董事</div>
<div class="a" style="left:647px;top:285px;line-height:14px;color:#111">其他</div>
</div>
<div class="a" style="left:399px;top:362px;width:1px;height:336px;background:#e6e6e6"></div>
<div class="a" style="left:650px;top:362px;width:1px;height:336px;background:#e6e6e6"></div>
<div class="a" style="left:736px;top:362px;width:1px;height:336px;background:#e6e6e6"></div>
<div class="a" style="left:802px;top:362px;width:1px;height:336px;background:#e6e6e6"></div>
<div class="a" style="left:912px;top:362px;width:1px;height:336px;background:#e6e6e6"></div>
<div class="a" style="left:978px;top:362px;width:1px;height:336px;background:#e6e6e6"></div>
<div class="a" style="left:268px;top:402px;width:1012px;height:1px;background:#e6e6e6"></div>
<div class="a" style="left:806px;top:371px;font-size:9.6px;line-height:10px;color:#2b86e8">abc</div><svg style="left:805px;top:388px" width="12" height="12"><g fill="none" stroke="#111" stroke-width="1.3"><path d="M0.6 5.6 Q2 2.2 6.6 2.1"/><path d="M9.6 6.3 Q8 9.4 3.4 9.4"/></g><path d="M5.2 -0.3 L8.6 2.1 L5.4 4.6 Z M4.8 6.8 L1.4 9.4 L4.8 11.9 Z" fill="#111"/><path d="M0.5 5.9 H10.5" stroke="#555" stroke-width="1.2"/></svg><div class="a" style="left:817px;top:386px;font-weight:bold;line-height:14px;color:#111">职务</div>
<div class="a" style="left:916px;top:371px;font-size:9.6px;line-height:10px;color:#2b86e8">abc</div><svg style="left:915px;top:388px" width="12" height="12"><g fill="none" stroke="#111" stroke-width="1.3"><path d="M0.6 5.6 Q2 2.2 6.6 2.1"/><path d="M9.6 6.3 Q8 9.4 3.4 9.4"/></g><path d="M5.2 -0.3 L8.6 2.1 L5.4 4.6 Z M4.8 6.8 L1.4 9.4 L4.8 11.9 Z" fill="#111"/><path d="M0.5 5.9 H10.5" stroke="#555" stroke-width="1.2"/></svg><div class="a" style="left:927px;top:386px;font-weight:bold;line-height:14px;color:#111">学历</div>
<div class="a" style="left:982px;top:371px;font-size:9.6px;line-height:10px;color:#2b86e8">abc</div><div class="a" style="left:982px;top:386px;font-weight:bold;line-height:14px;color:#111">头像内容</div>
<div class="a" style="left:801px;top:363px;width:113px;height:41px;border:2px solid #2f6ad0"></div>
<div class="a" style="left:909px;top:399px;width:7px;height:7px;background:#2f6ad0;border:1px solid #e8eef8"></div>
<div id="ov" class="a"></div>
<div id="dlg" class="a"></div>
<div class="a" style="left:408px;top:266px;font-size:16px;line-height:20px;color:#333">字段存储设置</div>
<svg style="left:753px;top:268px" width="12" height="12"><path d="M0.5 0.5 L11.2 11.2 M11.2 0.5 L0.5 11.2" stroke="#999" stroke-width="1.2"/></svg>
<div class="a" style="left:418px;top:308px;line-height:14px;color:#333">存储多个</div>
<div class="a" style="left:418px;top:344px;line-height:14px;color:#333">分隔符</div>
<div class="a" style="left:536px;top:309px;width:12px;height:12px;background:#4aa2f8"></div>
<svg style="left:536px;top:309px" width="12" height="12"><path d="M2.6 6.2 L5 8.6 L9.6 3.6" fill="none" stroke="#fff" stroke-width="1.6"/></svg>
<div class="a" style="left:534px;top:338px;width:230px;height:26px;border:1px solid #ccc;border-radius:3px"></div>
<div class="a" style="left:539px;top:344px;line-height:14px;color:#333">,</div>
<div class="a" style="left:616px;top:396px;width:70px;height:26px;background:#1ea0e8;border-radius:3px"></div>
<div class="a" style="left:698px;top:396px;width:70px;height:26px;border:1px solid #ddd;border-radius:3px"></div>
<div class="a" style="left:639px;top:402px;color:#fff;line-height:14px">确定</div>
<div class="a" style="left:721px;top:402px;line-height:14px;color:#333">取消</div>

</body></html>
